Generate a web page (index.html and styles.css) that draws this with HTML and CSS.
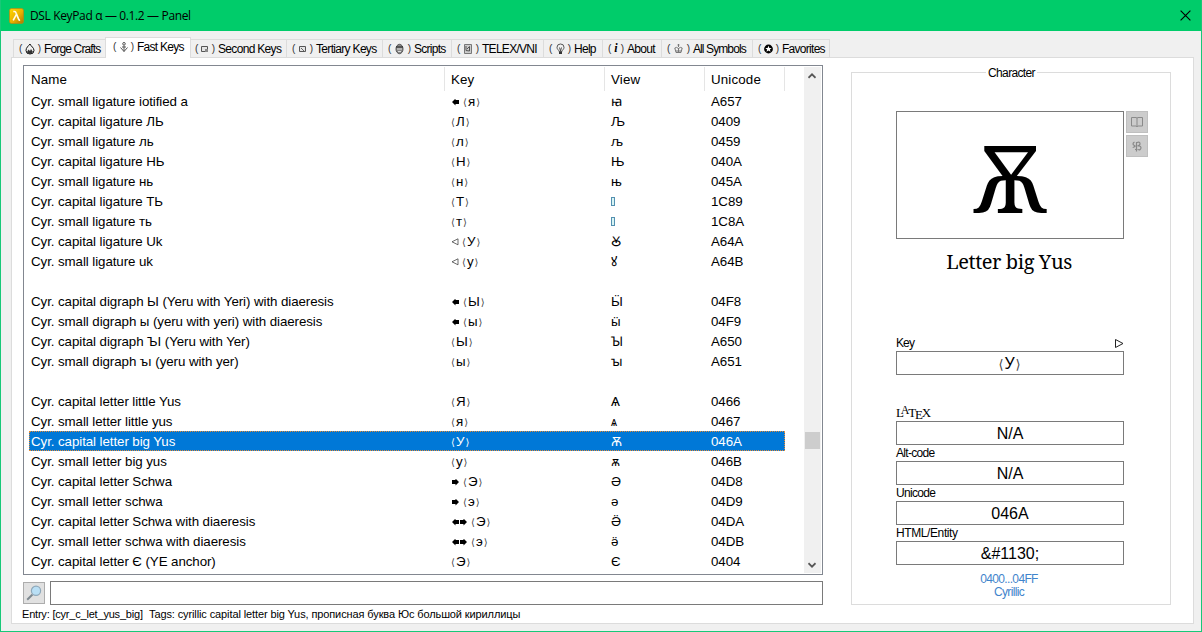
FILE: index.html
```html
<!DOCTYPE html>
<html lang="en">
<head>
<meta charset="utf-8">
<title>DSL KeyPad α — 0.1.2 — Panel</title>
<link rel="stylesheet" href="styles.css">
</head>
<body>
<div class="window">
  <header class="titlebar">
    <svg class="app-icon" width="15" height="16" viewBox="0 0 15 16"><defs><linearGradient id="gold" x1="0" y1="0" x2="1" y2="1"><stop offset="0" stop-color="#ffd800"/><stop offset=".55" stop-color="#eab000"/><stop offset="1" stop-color="#a97700"/></linearGradient></defs><rect x=".5" y=".5" width="14" height="15" rx="2" fill="url(#gold)" stroke="#b98a10" stroke-width=".7"/><path d="M4.300 3.500h1.200c1 0 1.300.6 1.700 1.700l2.500 6.200c.3.7.7.8 1.400.7M7.400 6.400L4.200 12.400" fill="none" stroke="#fffbe8" stroke-width="1.600"/></svg>
    <span class="title">DSL KeyPad α — 0.1.2 — Panel</span>
    <svg class="close" width="11" height="11" viewBox="0 0 11 11"><path d="M.6.6l9.800 9.800M10.400.6L.6 10.400" stroke="#000" stroke-width="1.150"/></svg>
  </header>
  <nav class="tabs">
    <div class="tab t-forge"><span class="glyph">(<svg width="10" height="12" viewBox="0 0 10 12"><path d="M5 1C3.500 3 1 4.500 1 7.500a4 3.500 0 0 0 8 0C9 4.500 6 3.500 5 1z" fill="none" stroke="#111" stroke-width="1"/><path d="M2 9l1.500-2.500L5 8l1-2 2 3-2.500 2H3z" fill="#333"/></svg>)</span><span class="label">Forge Crafts</span></div>
    <div class="tab t-fast active"><span class="glyph">(<svg width="10" height="12" viewBox="0 0 10 12"><circle cx="5" cy="2.800" r="1.300" fill="none" stroke="#555"/><path d="M5 4.500v6M1.500 6.500L5 10.500l3.500-4M3 6h4" fill="none" stroke="#555"/></svg>)</span><span class="label">Fast Keys</span></div>
    <div class="tab t-second"><span class="glyph">(<svg width="8" height="12" viewBox="0 0 8 12"><path d="M.5 3.500h6v5h-6z" fill="#e4e4e4" stroke="#555"/><path d="M4 6h3v3H4z" fill="#888"/></svg>)</span><span class="label">Second Keys</span></div>
    <div class="tab t-tertiary"><span class="glyph">(<svg width="8" height="12" viewBox="0 0 8 12"><path d="M.5 3.500h6v5h-6z" fill="#e4e4e4" stroke="#555"/><path d="M2 5l3.500 3.500" stroke="#666"/></svg>)</span><span class="label">Tertiary Keys</span></div>
    <div class="tab t-scripts"><span class="glyph">(<svg width="9" height="12" viewBox="0 0 9 12"><ellipse cx="4.500" cy="6" rx="3.500" ry="4.700" fill="#888" stroke="#555"/><path d="M1 4h7" stroke="#222"/><path d="M2 6h5M3 8.500h3" stroke="#ddd"/></svg>)</span><span class="label">Scripts</span></div>
    <div class="tab t-telex"><span class="glyph">(<svg width="8" height="12" viewBox="0 0 8 12"><path d="M.5 1.500h7v9h-7z" fill="#ccc" stroke="#777"/><path d="M2 3v4.500L5.500 8V3.500L3 6" fill="none" stroke="#555"/></svg>)</span><span class="label">TELEX/VNI</span></div>
    <div class="tab t-help"><span class="glyph">(<svg width="9" height="12" viewBox="0 0 9 12"><path d="M3 8.500C3 7 1 6.500 1 4.300a3.500 3.300 0 0 1 7 0C8 6.500 6 7 6 8.500zM3.500 4.500L4.500 8l1-3.500" fill="none" stroke="#444" stroke-width=".9"/><path d="M3 9h3v2H3z" fill="#333"/></svg>)</span><span class="label">Help</span></div>
    <div class="tab t-about"><span class="glyph">(<b class="info">i</b>)</span><span class="label">About</span></div>
    <div class="tab t-all"><span class="glyph">(<svg width="9" height="12" viewBox="0 0 9 12"><path d="M4.500 1v3M3.500 2h2M2 9.500L.8 5Q2.500 3.500 4.500 5.500 6.500 3.500 8.200 5L7 9.500zM2 8h5M4.500 5v4" fill="none" stroke="#777"/></svg>)</span><span class="label">All Symbols</span></div>
    <div class="tab t-fav"><span class="glyph">(<svg width="9" height="12" viewBox="0 0 9 12"><circle cx="4.500" cy="6" r="4.400" fill="#000"/><path d="M4.500 2.700l.9 2.200 2.300.1-1.800 1.500.6 2.300-2-1.200-2 1.200.6-2.300-1.800-1.500 2.300-.1z" fill="#fff"/></svg>)</span><span class="label">Favorites</span></div>
  </nav>
  <main class="panel">
    <section class="left">
      <div class="list">
        <div class="table">
          <div class="row head"><span>Name</span><span>Key</span><span>View</span><span>Unicode</span></div>
          <div class="row"><span>Cyr. small ligature iotified a</span><span><i class="arr l"></i><q>я</q></span><span>ꙗ</span><span>A657</span></div>
          <div class="row"><span>Cyr. capital ligature ЛЬ</span><span><q>Л</q></span><span>Љ</span><span>0409</span></div>
          <div class="row"><span>Cyr. small ligature ль</span><span><q>л</q></span><span>љ</span><span>0459</span></div>
          <div class="row"><span>Cyr. capital ligature НЬ</span><span><q>Н</q></span><span>Њ</span><span>040A</span></div>
          <div class="row"><span>Cyr. small ligature нь</span><span><q>н</q></span><span>њ</span><span>045A</span></div>
          <div class="row"><span>Cyr. capital ligature ТЬ</span><span><q>Т</q></span><span><i class="missing"></i></span><span>1C89</span></div>
          <div class="row"><span>Cyr. small ligature ть</span><span><q>т</q></span><span><i class="missing"></i></span><span>1C8A</span></div>
          <div class="row"><span>Cyr. capital ligature Uk</span><span><svg class="tri" width="8" height="8" viewBox="0 0 8 8"><path d="M7 .8v6L1 3.800z" fill="none" stroke="#444" stroke-width=".8"/></svg><q>У</q></span><span>Ꙋ</span><span>A64A</span></div>
          <div class="row"><span>Cyr. small ligature uk</span><span><svg class="tri" width="8" height="8" viewBox="0 0 8 8"><path d="M7 .8v6L1 3.800z" fill="none" stroke="#444" stroke-width=".8"/></svg><q>у</q></span><span>ꙋ</span><span>A64B</span></div>
          <div class="row"></div>
          <div class="row"><span>Cyr. capital digraph Ы (Yeru with Yeri) with diaeresis</span><span><i class="arr l"></i><q>Ы</q></span><span>Ӹ</span><span>04F8</span></div>
          <div class="row"><span>Cyr. small digraph ы (yeru with yeri) with diaeresis</span><span><i class="arr l"></i><q>ы</q></span><span>ӹ</span><span>04F9</span></div>
          <div class="row"><span>Cyr. capital digraph ЪІ (Yeru with Yer)</span><span><q>Ы</q></span><span>Ꙑ</span><span>A650</span></div>
          <div class="row"><span>Cyr. small digraph ъı (yeru with yer)</span><span><q>ы</q></span><span>ꙑ</span><span>A651</span></div>
          <div class="row"></div>
          <div class="row"><span>Cyr. capital letter little Yus</span><span><q>Я</q></span><span>Ѧ</span><span>0466</span></div>
          <div class="row"><span>Cyr. small letter little yus</span><span><q>я</q></span><span class="yus">ѧ</span><span>0467</span></div>
          <div class="row selected"><span>Cyr. capital letter big Yus</span><span><q>У</q></span><span>Ѫ</span><span>046A</span></div>
          <div class="row"><span>Cyr. small letter big yus</span><span><q>у</q></span><span>ѫ</span><span>046B</span></div>
          <div class="row"><span>Cyr. capital letter Schwa</span><span><i class="arr r"></i><q>Э</q></span><span>Ә</span><span>04D8</span></div>
          <div class="row"><span>Cyr. small letter schwa</span><span><i class="arr r"></i><q>э</q></span><span>ә</span><span>04D9</span></div>
          <div class="row"><span>Cyr. capital letter Schwa with diaeresis</span><span><i class="arr l"></i><i class="arr r"></i><q>Э</q></span><span>Ӛ</span><span>04DA</span></div>
          <div class="row"><span>Cyr. small letter schwa with diaeresis</span><span><i class="arr l"></i><i class="arr r"></i><q>э</q></span><span>ӛ</span><span>04DB</span></div>
          <div class="row"><span>Cyr. capital letter Є (YE anchor)</span><span><q>Э</q></span><span>Є</span><span>0404</span></div>
        </div>
        <div class="scrollbar">
          <svg width="8" height="6" viewBox="0 0 8 6"><path d="M.5 4.800L4 1.300l3.500 3.500" fill="none" stroke="#555" stroke-width="1.700"/></svg>
          <div class="thumb"></div>
          <svg class="down" width="8" height="6" viewBox="0 0 8 6"><path d="M.5 1.200L4 4.700l3.500-3.500" fill="none" stroke="#555" stroke-width="1.700"/></svg>
        </div>
      </div>
      <div class="search">
        <div class="search-btn"><svg width="16" height="16" viewBox="0 0 16 16"><path d="M1.200 14.800L6.500 9.500" stroke="#7e8990" stroke-width="2"/><circle cx="10" cy="5.800" r="4.600" fill="#b9dff5" stroke="#8fa9bb" stroke-width="1.200"/></svg></div>
        <div class="search-input"></div>
      </div>
      <div class="status"><span class="entry">Entry: [cyr_c_let_yus_big]</span><span class="tags">Tags: cyrillic capital letter big Yus, прописная буква Юс большой кириллицы</span></div>
    </section>
    <section class="group">
      <div class="group-title"><span>Character</span></div>
      <div class="preview-row">
        <div class="preview">Ѫ</div>
        <div class="tools">
          <div class="tool"><svg width="14" height="12" viewBox="0 0 14 12"><path d="M1.500 1.500h4.500l1 .5 1-.5h4.500v8.500H8l-1 .7-1-.7H1.500zM7 2v8.500" fill="none" stroke="#8a8a8a"/></svg></div>
          <div class="tool"><svg width="10" height="11" viewBox="0 0 10 11"><path d="M2.500 1C.5 2 .5 4 2.500 4.500S1 6.500 1 6M4.500 1v9.500M3 8.500h2.500M5 1.500Q8 .5 8 2.700 8 4.500 5.500 4.800 9 4.500 9 7 8.500 9.500 6 8.500" fill="none" stroke="#888" stroke-width="1.200"/></svg></div>
        </div>
      </div>
      <div class="char-name"><span>Letter big Yus</span></div>
      <div class="fields">
        <div class="field key"><div class="cap"><span class="c-key">Key</span><svg width="10" height="10" viewBox="0 0 10 10"><path d="M1.500 .5l7.500 4-7.500 4z" fill="none" stroke="#222"/></svg></div><div class="box"><q>У</q></div></div>
        <div class="field"><div class="cap latex">L<span class="up">A</span>T<span class="dn">E</span>X</div><div class="box">N/A</div></div>
        <div class="field"><div class="cap"><span class="c-alt">Alt-code</span></div><div class="box">N/A</div></div>
        <div class="field"><div class="cap"><span class="c-alt">Unicode</span></div><div class="box">046A</div></div>
        <div class="field"><div class="cap"><span>HTML/Entity</span></div><div class="box">&amp;#1130;</div></div>
      </div>
      <div class="block">0400...04FF<br>Cyrillic</div>
    </section>
  </main>
</div>
</body>
</html>
```
FILE: styles.css
```css
* { box-sizing: border-box; }
body { margin: 0; font-family: "Liberation Sans", Arial, sans-serif; color: #000; }
.window { width: 1202px; height: 632px; background: #f0f0f0; border: 1px solid #18c878; border-top: 0; display: flex; flex-direction: column; overflow: hidden; }
.titlebar { height: 31px; flex: none; margin: 0 -1px; background: #00cc6a; display: flex; align-items: center; padding: 0 11px 0 9px; }
.title { margin-left: 6px; font: 12px/16px "Open Sans", "Noto Sans", sans-serif; letter-spacing: -.36px; white-space: pre; }
.close { margin-left: auto; }

.tabs { display: flex; align-items: flex-end; height: 26px; padding-left: 12px; flex: none; }
.tab { display: flex; align-items: center; height: 18px; border: 1px solid #dcdcdc; border-bottom: 0; border-left: 0; padding-left: 5px; font-size: 12px; line-height: 16px; letter-spacing: -.72px; white-space: nowrap; }
.tab.active { height: 21px; background: #fff; border-left: 1px solid #dcdcdc; margin-bottom: -1px; margin-left: -1px; padding-bottom: 2px; position: relative; }
.glyph { display: flex; align-items: center; justify-content: space-between; flex: none; font-size: 10px; letter-spacing: 0; color: #333; width: 22px; margin-right: 3px; }
.info { font: italic bold 12px "Liberation Serif", serif; color: #000; }
.t-forge { width: 93px; border-left: 1px solid #dcdcdc; }
.t-forge .label { letter-spacing: -.85px; }
.t-fast { width: 86px; padding-left: 7px; }
.t-fast .glyph { width: 21px; }
.t-second { width: 96px; padding-left: 4px; }
.t-second .glyph { width: 20px; }
.t-tertiary .glyph { width: 21px; }
.t-second .label, .t-tertiary .label { letter-spacing: -.68px; }
.t-tertiary { width: 96px; }
.t-scripts { width: 69px; }
.t-scripts .glyph { width: 23px; }
.t-telex { width: 92px; }
.t-help { width: 59px; }
.t-about { width: 59px; }
.t-about .glyph { width: 16px; }
.t-all { width: 91px; }
.t-all .glyph { width: 23px; }
.t-all .label { letter-spacing: -.9px; }
.t-fav { width: 77px; }
.t-fav .glyph { width: 21px; }

.panel { flex: none; width: 1183px; height: 567px; margin-left: 10px; background: #fff; border: 1px solid #dcdcdc; display: flex; padding: 7px 0 0 11px; }
.left { width: 800px; display: flex; flex-direction: column; }
.list { height: 510px; border: 1px solid #828790; display: flex; justify-content: space-between; padding: 1px; }
.table { width: 756px; margin-left: 4px; font-size: 13.33px; }
.row { display: grid; grid-template-columns: 420px 160px 100px 76px; height: 20px; line-height: 20px; letter-spacing: -.08px; white-space: nowrap; }
.row > span { padding: 2px 0 0 2px; display: flex; align-items: center; height: 20px; }
.row.head { height: 24px; grid-template-columns: 416px 160px 100px 80px; }
.row.head > span { height: 24px; border-right: 1px solid #e5e5e5; letter-spacing: .15px; }
.row.head > span + span { padding-left: 6px; }
.row.selected { background: #0078d7; color: #fff; outline: 1px dotted #e78b35; outline-offset: -1px; }
.row > .yus { font-size: 12px; }
q { quotes: none; display: inline-flex; align-items: center; }
q::before, q::after { width: 5px; font: 10px/12px "DejaVu Sans", sans-serif; color: #444; transform: translateY(1px); }
q::before { content: "⟨"; }
q::after { content: "⟩"; margin-left: 1px; }
.selected q::before, .selected q::after { color: #fff; }
.arr { width: 7px; height: 7px; background: #000; clip-path: polygon(0 50%, 50% 0, 50% 22%, 100% 22%, 100% 78%, 50% 78%, 50% 100%); margin-right: 4px; }
.arr.r { transform: scaleX(-1); }
.arr.l + .arr.r { margin-left: -3px; }
.arr:first-child { margin-left: 1px; }
.tri { margin-right: 3px; }
.missing { width: 4px; height: 9px; border: 1px solid #5490b0; background: #d8f5f5; margin-top: -2px; }

.scrollbar { width: 17px; background: #f0f0f0; display: flex; flex-direction: column; align-items: center; padding: 6px 1px 0 0; }
.thumb { width: 15px; height: 17px; background: #cdcdcd; margin-top: 353px; }
.down { margin-top: auto; margin-bottom: 5px; }

.search { display: flex; height: 24px; margin-top: 6px; justify-content: space-between; }
.search-btn { width: 22px; height: 22px; margin-top: 1px; background: #e1e1e1; border: 1px solid #adadad; display: flex; align-items: center; justify-content: center; }
.search-input { width: 773px; border: 1px solid #7a7a7a; }
.status { height: 18px; line-height: 18px; font-size: 11px; letter-spacing: -.11px; white-space: nowrap; display: flex; margin-left: -1px; }
.entry { width: 127px; letter-spacing: -.2px; }

.group { width: 320px; height: 533px; border: 1px solid #dcdcdc; margin: 7px 0 0 28px; display: flex; flex-direction: column; }
.group-title { height: 16px; margin-top: -8px; padding-left: 1px; text-align: center; font-size: 12px; line-height: 16px; letter-spacing: -.65px; }
.group-title span { background: #fff; padding: 0 2px; }
.preview-row { display: flex; margin: 30px 0 0 44px; }
.preview { width: 228px; height: 128px; border: 1px solid #7a7a7a; display: flex; align-items: center; justify-content: center; padding-top: 4px; font: 93px/120px "Noto Serif", "DejaVu Serif", serif; }
.tools { margin-left: 2px; display: flex; flex-direction: column; gap: 2px; }
.tool { width: 22px; height: 22px; background: #ccc; border: 1px solid #bfbfbf; display: flex; align-items: center; justify-content: center; }
.char-name { width: 226px; margin: 9px 0 0 44px; height: 28px; font: 20px/28px "Noto Serif", "DejaVu Serif", serif; letter-spacing: -.42px; text-align: center; white-space: nowrap; }
.fields { width: 228px; margin-left: 44px; margin-top: 60px; }
.field { height: 40px; }
.field.key { height: 70px; }
.cap { height: 15px; display: flex; align-items: center; justify-content: space-between; font-size: 12px; line-height: 15px; letter-spacing: -.4px; }
.c-key { letter-spacing: -.9px; }
.c-alt { letter-spacing: -.7px; }
.field .box { height: 24px; border: 1px solid #7a7a7a; display: flex; align-items: center; justify-content: center; padding-top: 2px; font-size: 16px; }
.box q::before, .box q::after { width: 6px; font-size: 13px; }
.latex { justify-content: flex-start; font: 13px/15px "Liberation Serif", serif; letter-spacing: -1.200px; padding-bottom: 3px; }
.up { transform: translateY(-2px); font-size: 12px; margin-left: -2px; }
.dn { transform: translateY(2px); }
.block { margin-top: 7px; text-align: center; width: 314px; font-size: 12px; line-height: 13px; letter-spacing: -.65px; color: #3f84cc; }
```
